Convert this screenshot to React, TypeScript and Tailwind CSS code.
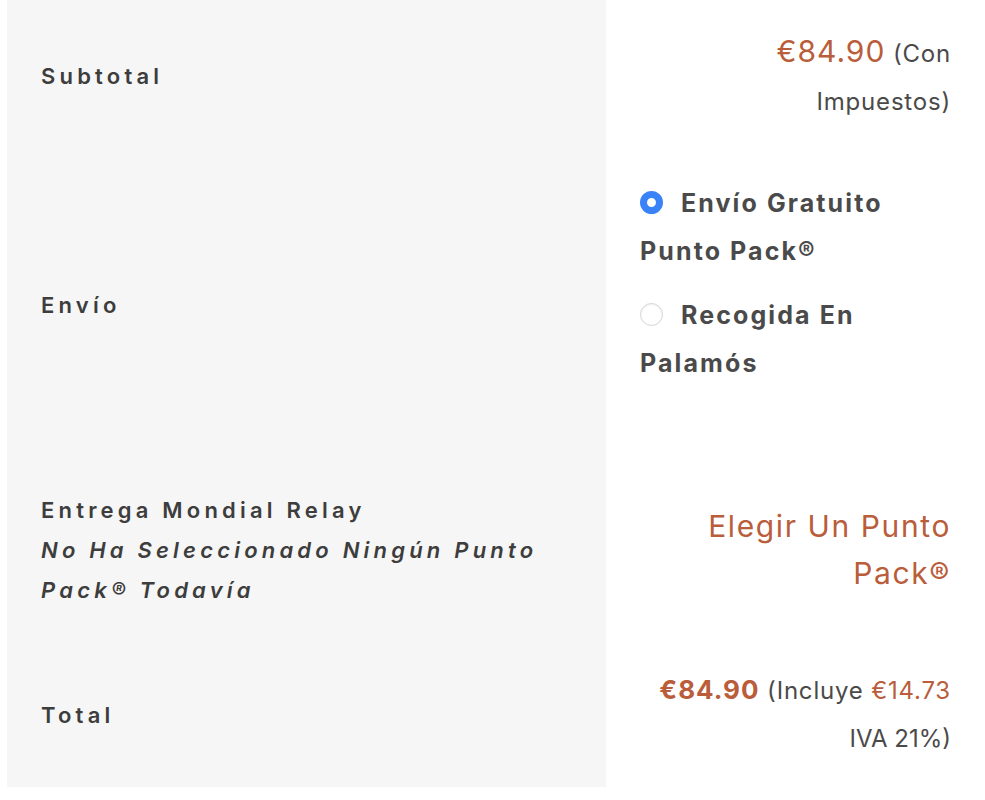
import React from "react";

const font = "font-['Inter','Noto_Sans',sans-serif]";

function Label({ children }: { children: React.ReactNode }) {
  return (
    <div className="text-[22px] leading-[40px] font-semibold tracking-[4.2px] text-[#3d3d3d]">
      {children}
    </div>
  );
}

function Radio({ checked, label }: { checked?: boolean; label: string }) {
  return (
    <div className="text-[25px] leading-[48px] font-bold tracking-[2.1px] text-[#4a4a4a]">
      {checked ? (
        <span className="inline-block align-[-2px] w-[23px] h-[23px] rounded-full border-[7px] border-[#3a82f7] bg-white mr-[18px]" />
      ) : (
        <span className="inline-block align-[-2px] w-[23px] h-[23px] rounded-full border border-[#d4d4d4] bg-white mr-[18px] shadow-[inset_0_1px_2px_rgba(0,0,0,0.06)]" />
      )}
      {label}
    </div>
  );
}

export default function App() {
  const orange = "text-[#b95d3b]";

  return (
    <div className={`${font} w-[985px] h-[800px] bg-white pl-[7px]`}>
      <div className="flex h-[152px]">
        <div className="w-[599px] bg-[#f6f6f6] px-[34px] flex items-center">
          <Label>Subtotal</Label>
        </div>
        <div className="flex-1 px-[34px] flex items-center justify-end text-right">
          <div className="leading-[48px] text-[#4a4a4a] text-[24px] tracking-[0.8px]">
            <span className={`${orange} text-[30px] tracking-[1px]`}>€84.90</span> (Con
            <br />
            Impuestos)
          </div>
        </div>
      </div>

      <div className="flex h-[306px]">
        <div className="w-[599px] bg-[#f6f6f6] px-[34px] flex items-center">
          <Label>Envío</Label>
        </div>
        <div className="flex-1 px-[34px] pt-[27px]">
          <Radio checked label="Envío Gratuito Punto Pack®" />
          <div className="h-[16px]" />
          <Radio label="Recogida En Palamós" />
        </div>
      </div>

      <div className="flex h-[184px]">
        <div className="w-[599px] bg-[#f6f6f6] px-[34px] flex items-center">
          <Label>
            Entrega Mondial Relay
            <br />
            <span className="italic">No Ha Seleccionado Ningún Punto Pack® Todavía</span>
          </Label>
        </div>
        <div className="flex-1 px-[34px] flex items-center justify-end text-right">
          <div className={`${orange} text-[30px] leading-[47px] tracking-[1.6px]`}>
            Elegir Un Punto Pack®
          </div>
        </div>
      </div>

      <div className="flex h-[145px]">
        <div className="w-[599px] bg-[#f6f6f6] px-[34px] flex items-center">
          <Label>Total</Label>
        </div>
        <div className="flex-1 px-[34px] flex items-center justify-end text-right">
          <div className="leading-[48px] text-[24px] tracking-[0.8px] text-[#4a4a4a]">
            <span className={`${orange} font-bold text-[26px] tracking-[1px]`}>€84.90</span>{" "}
            (Incluye <span className={orange}>€14.73</span>
            <br />
            <span className="tracking-[0px]">IVA 21%)</span>
          </div>
        </div>
      </div>
    </div>
  );
}
